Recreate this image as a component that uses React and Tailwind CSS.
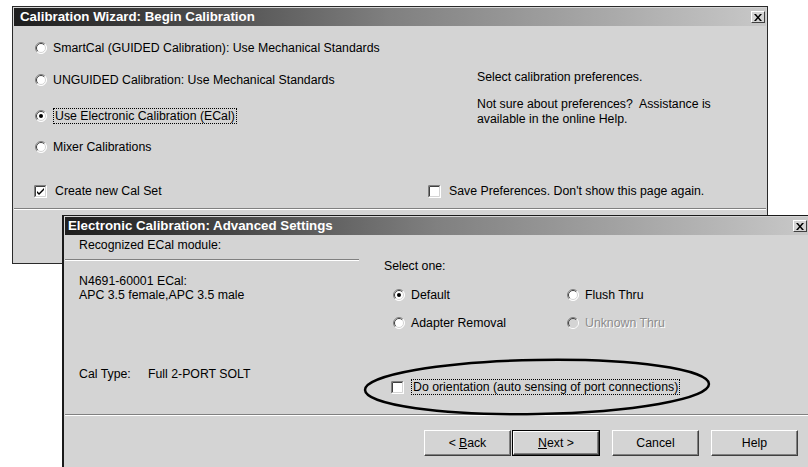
import React from "react";

const FACE = "bg-[#d4d4d4]";

function Radio({ checked, disabled }) {
  return (
    <svg width="12" height="12" viewBox="0 0 12 12" className="shrink-0">
      <circle cx="6" cy="6" r="5.5" fill={disabled ? "#d4d4d4" : "#fff"} />
      <path d="M2.1 9.9 A5.5 5.5 0 0 1 9.9 2.1" stroke="#808080" fill="none" />
      <path d="M2.1 9.9 A5.5 5.5 0 0 0 9.9 2.1" stroke="#fff" fill="none" />
      <path d="M2.8 9.2 A4.5 4.5 0 0 1 9.2 2.8" stroke="#404040" fill="none" />
      <path d="M2.8 9.2 A4.5 4.5 0 0 0 9.2 2.8" stroke="#d4d4d4" fill="none" />
      {checked && <circle cx="6" cy="6" r="2" fill="#000" />}
    </svg>
  );
}

function Checkbox({ checked }) {
  return (
    <svg width="13" height="13" viewBox="0 0 13 13" className="shrink-0">
      <rect x="0" y="0" width="13" height="13" fill="#fff" />
      <path d="M0.5 12.5 V0.5 H12.5" stroke="#808080" fill="none" />
      <path d="M1.5 11.5 V1.5 H11.5" stroke="#404040" fill="none" />
      <path d="M0.5 12.5 H12.5 V0.5" stroke="#fff" fill="none" />
      <path d="M1.5 11.5 H11.5 V1.5" stroke="#d4d4d4" fill="none" />
      {checked && (
        <path d="M3 6 L5 8 L10 3 V5 L5 10 L3 8 Z" fill="#000" />
      )}
    </svg>
  );
}

function CloseBox() {
  return (
    <div className="w-[14px] h-[12px] bg-[#d4d4d4] border border-t-white border-l-white border-r-[#404040] border-b-[#404040] flex items-center justify-center">
      <svg width="8" height="7" viewBox="0 0 8 7">
        <path d="M0 0 H2 L4 2.5 L6 0 H8 L5 3.5 L8 7 H6 L4 4.5 L2 7 H0 L3 3.5 Z" fill="#000" />
      </svg>
    </div>
  );
}

function TitleBar({ title, indent }) {
  return (
    <div className={`h-[18px] flex items-center justify-between pr-[1px] bg-gradient-to-r from-[#1e1e1e] via-[#808080] to-[#c8c8c8] ${indent}`}>
      <span className="text-white font-bold text-[13.3px] leading-none">{title}</span>
      <CloseBox />
    </div>
  );
}

function Separator({ className = "" }) {
  return <div className={`h-[2px] border-t border-[#808080] border-b border-b-white ${className}`} />;
}

function Option({ checked, disabled, focus, children, className = "" }) {
  return (
    <div className={`h-[16px] flex items-center ${className}`}>
      <Radio checked={checked} disabled={disabled} />
      <span
        className={`ml-[6px] leading-[14px] ${focus ? "border border-dotted border-black px-px " : ""}${
          disabled ? "text-[#8c8c8c] [text-shadow:1px_1px_0_#fff]" : ""
        }`}
      >
        {children}
      </span>
    </div>
  );
}

function Button({ children, primary }) {
  const face = (
    <div className="h-full w-full flex items-center justify-center border border-t-white border-l-white border-r-[#404040] border-b-[#404040] shadow-[inset_-1px_-1px_0_#808080]">
      {children}
    </div>
  );
  return primary ? (
    <div className="w-[88px] h-[26px] border border-black">{face}</div>
  ) : (
    <div className="w-[87px] h-[26px]">{face}</div>
  );
}

export default function App() {
  return (
    <div className="relative w-[808px] h-[467px] overflow-hidden bg-white text-[12.3px] text-black font-['Liberation_Sans',Arial,sans-serif]">
      {/* wizard window behind */}
      <div className={`absolute left-[12px] top-[6px] w-[756px] h-[258px] border border-[#2a2a2a] p-px ${FACE} flex flex-col`}>
        <TitleBar title="Calibration Wizard: Begin Calibration" indent="pl-[6px]" />
        <div className="flex pt-[14px]">
          <div className="w-[440px] pl-[21px] flex flex-col">
            <Option>SmartCal (GUIDED Calibration): Use Mechanical Standards</Option>
            <Option className="mt-[16px]">UNGUIDED Calibration: Use Mechanical Standards</Option>
            <Option className="mt-[20px]" checked focus>
              Use Electronic Calibration (ECal)
            </Option>
            <Option className="mt-[15px]">Mixer Calibrations</Option>
          </div>
          <div className="pl-[23px] pt-[30px] flex flex-col leading-[15px]">
            <span>Select calibration preferences.</span>
            <span className="mt-[12px]">Not sure about preferences?&nbsp; Assistance is</span>
            <span>available in the online Help.</span>
          </div>
        </div>
        <div className="flex mt-[28px] h-[16px] items-center">
          <div className="w-[414px] pl-[20px] flex items-center">
            <Checkbox checked />
            <span className="ml-[8px]">Create new Cal Set</span>
          </div>
          <div className="flex items-center">
            <Checkbox />
            <span className="ml-[8px]">Save Preferences. Don't show this page again.</span>
          </div>
        </div>
        <Separator className="mt-[9px]" />
      </div>

      {/* advanced settings window on top */}
      <div className={`absolute left-[62px] top-[215px] w-[748px] h-[270px] border border-[#1a1a1a] border-l-2 p-px ${FACE} flex flex-col`}>
        <TitleBar title="Electronic Calibration: Advanced Settings" indent="pl-[3px]" />
        <div className="flex h-[179px]">
          <div className="w-[294px] flex flex-col">
            <div className="pl-[14px] pt-[3px] leading-[14px]">Recognized ECal module:</div>
            <Separator className="mt-[7px]" />
            <div className="pl-[14px] mt-[13px] leading-[14px] flex flex-col">
              <span>N4691-60001 ECal:</span>
              <span>APC 3.5 female,APC 3.5 male</span>
            </div>
            <div className="pl-[14px] mt-[65px] leading-[14px] flex">
              <span className="w-[69px]">Cal Type:</span>
              <span>Full 2-PORT SOLT</span>
            </div>
          </div>
          <div className="ml-[25px] flex flex-col">
            <div className="pt-[24px] leading-[14px]">Select one:</div>
            <div className="pl-[9px] mt-[14px] grid grid-cols-[174px_auto] gap-y-[12px]">
              <Option checked>Default</Option>
              <Option>Flush Thru</Option>
              <Option>Adapter Removal</Option>
              <Option disabled>Unknown Thru</Option>
            </div>
            <div className="pl-[7px] mt-[48px] h-[16px] flex items-center">
              <Checkbox />
              <span className="ml-[7px] leading-[14px] border border-dotted border-black px-px">
                Do orientation (auto sensing of port connections)
              </span>
            </div>
          </div>
        </div>
        <Separator />
        <div className="flex justify-end pr-[10px] pt-[14px] gap-[12px]">
          <div className="flex gap-[1px]">
            <Button>
              &lt; <span className="underline ml-[3px]">B</span>ack
            </Button>
            <Button primary>
              <span className="underline">N</span>ext &gt;
            </Button>
          </div>
          <Button>Cancel</Button>
          <Button>Help</Button>
        </div>
      </div>

      {/* hand-drawn highlight ring */}
      <svg className="absolute left-[361px] top-[357px] pointer-events-none" width="352" height="62" viewBox="0 0 352 62">
        <ellipse cx="176" cy="30" rx="172" ry="27" fill="none" stroke="#000" strokeWidth="2.5" transform="rotate(-1 176 30)" />
      </svg>
    </div>
  );
}
